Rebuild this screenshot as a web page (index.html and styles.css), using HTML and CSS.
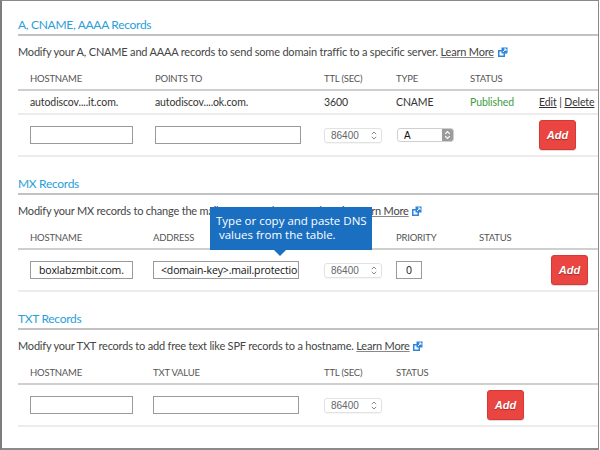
FILE: index.html
```html
<!DOCTYPE html>
<html>
<head>
<meta charset="utf-8">
<link rel="stylesheet" href="styles.css">
</head>
<body>
<div class="frame">
  <section class="section">
    <h2 class="title">A, CNAME, AAAA Records</h2>
    <p class="desc">Modify your A, CNAME and AAAA records to send some domain traffic to a specific server. <a class="learn">Learn More</a> <svg class="ext" width="10" height="10" viewBox="0 0 10 10"><rect x="0.75" y="3.75" width="5.5" height="5.5" fill="none" stroke="#2f86d8" stroke-width="1.5"/><rect x="3.5" y="0.5" width="6" height="6" fill="#2f86d8"/><path d="M5 5 L8 2 M6 2 H8 V4" stroke="#fff" stroke-width="1" fill="none"/></svg></p>
    <div class="table t-a">
      <div class="row head"><span>Hostname</span><span>Points To</span><span>TTL (Sec)</span><span>Type</span><span>Status</span><span></span></div>
      <div class="row data"><span>autodiscov....it.com.</span><span>autodiscov....ok.com.</span><span>3600</span><span>CNAME</span><span class="published">Published</span><span class="actions"><a>Edit</a> | <a>Delete</a></span></div>
      <div class="row inputs">
        <span><span class="input w-host"></span></span>
        <span><span class="input w-val"></span></span>
        <span><span class="spin">86400<svg class="chev" width="6" height="9" viewBox="0 0 6 9"><path d="M0.8 3.2 L3 1 L5.2 3.2 M0.8 5.8 L3 8 L5.2 5.8" stroke="#888" stroke-width="1" fill="none"/></svg></span></span>
        <span><span class="select">A<span class="sel-btn"><svg width="7" height="10" viewBox="0 0 7 10"><path d="M1.2 3.8 L3.5 1.5 L5.8 3.8 M1.2 6.2 L3.5 8.5 L5.8 6.2" stroke="#fff" stroke-width="1.2" fill="none"/></svg></span></span></span>
        <span></span>
        <span><button class="add">Add</button></span>
      </div>
    </div>
  </section>

  <section class="section mx">
    <h2 class="title">MX Records</h2>
    <p class="desc">Modify your MX records to change the mail server used for your domain. <a class="learn">Learn More</a> <svg class="ext" width="10" height="10" viewBox="0 0 10 10"><rect x="0.75" y="3.75" width="5.5" height="5.5" fill="none" stroke="#2f86d8" stroke-width="1.5"/><rect x="3.5" y="0.5" width="6" height="6" fill="#2f86d8"/><path d="M5 5 L8 2 M6 2 H8 V4" stroke="#fff" stroke-width="1" fill="none"/></svg></p>
    <div class="table t-mx">
      <div class="row head"><span>Hostname</span><span>Address</span><span>TTL (Sec)</span><span>Priority</span><span>Status</span><span></span></div>
      <div class="row inputs">
        <span><span class="input w-host filled">boxlabzmbit.com.</span></span>
        <span><span class="input w-val filled">&lt;domain-key&gt;.mail.protection.outlook.com.</span></span>
        <span><span class="spin">86400<svg class="chev" width="6" height="9" viewBox="0 0 6 9"><path d="M0.8 3.2 L3 1 L5.2 3.2 M0.8 5.8 L3 8 L5.2 5.8" stroke="#888" stroke-width="1" fill="none"/></svg></span></span>
        <span><span class="input w-prio filled">0</span></span>
        <span></span>
        <span><button class="add">Add</button></span>
      </div>
    </div>
    <div class="tooltip">Type or copy and paste DNS<br>&nbsp;values from the table.</div>
  </section>

  <section class="section">
    <h2 class="title">TXT Records</h2>
    <p class="desc">Modify your TXT records to add free text like SPF records to a hostname. <a class="learn">Learn More</a> <svg class="ext" width="10" height="10" viewBox="0 0 10 10"><rect x="0.75" y="3.75" width="5.5" height="5.5" fill="none" stroke="#2f86d8" stroke-width="1.5"/><rect x="3.5" y="0.5" width="6" height="6" fill="#2f86d8"/><path d="M5 5 L8 2 M6 2 H8 V4" stroke="#fff" stroke-width="1" fill="none"/></svg></p>
    <div class="table t-txt">
      <div class="row head"><span>Hostname</span><span>TXT Value</span><span>TTL (Sec)</span><span>Status</span><span></span></div>
      <div class="row inputs">
        <span><span class="input w-host"></span></span>
        <span><span class="input w-val"></span></span>
        <span><span class="spin">86400<svg class="chev" width="6" height="9" viewBox="0 0 6 9"><path d="M0.8 3.2 L3 1 L5.2 3.2 M0.8 5.8 L3 8 L5.2 5.8" stroke="#888" stroke-width="1" fill="none"/></svg></span></span>
        <span></span>
        <span><button class="add">Add</button></span>
      </div>
    </div>
  </section>
</div>
</body>
</html>
```

FILE: styles.css
```css
* { box-sizing: border-box; }
html, body { margin: 0; padding: 0; background: #fff; }
body { font-family: Lato, "Open Sans", sans-serif; color: #444; }

.frame {
  width: 599px;
  height: 450px;
  border: 1px solid #8a8a8a;
  border-left: 2px solid #7d7d7d;
  border-bottom-width: 2px;
  overflow: hidden;
  padding-left: 16px;
  background: #fff;
}

.section { position: relative; }

.title {
  margin: 17px 0 0;
  font-weight: normal;
  font-size: 12px;
  letter-spacing: -0.3px;
  line-height: 19px;
  color: #2a9ed8;
  border-bottom: 2px solid #c2c2c2;
  white-space: nowrap;
}
.section:first-child .title { margin-top: 14px; }

.desc {
  margin: 8px 0 0;
  font-size: 11px;
  letter-spacing: -0.2px;
  line-height: 16px;
  color: #454545;
  white-space: nowrap;
}
.learn { color: #444; text-decoration: underline; text-decoration-color: #888; }
.ext { vertical-align: -1px; margin-left: 1px; }

.table { margin-top: 12px; }

.row {
  display: grid;
  padding-left: 12px;
  align-items: center;
  white-space: nowrap;
}
.t-a .row { grid-template-columns: 125px 169px 72px 74px 69px 1fr; }
.t-mx .row { grid-template-columns: 123px 171px 72px 83px 72px 1fr; }
.t-txt .row { grid-template-columns: 123px 171px 72px 91px 1fr; }

.head {
  font-size: 9.5px;
  letter-spacing: -0.2px;
  line-height: 14px;
  text-transform: uppercase;
  color: #555;
  padding-bottom: 3px;
  border-bottom: 2px solid #cfcfcf;
}

.data {
  font-size: 10.5px;
  letter-spacing: -0.1px;
  line-height: 22px;
  color: #333;
  border-bottom: 2px solid #ececec;
}
.published { color: #3c9d3c; }
.actions a { color: #333; text-decoration: underline; }

.inputs {
  height: 42px;
  border-bottom: 2px solid #ececec;
}

.input {
  display: block;
  height: 18px;
  border: 1px solid #9a9a9a;
  background: #fff;
  font-family: "Open Sans", sans-serif;
  font-size: 10.5px;
  letter-spacing: -0.15px;
  line-height: 16px;
  color: #111;
  padding: 0 8px;
  overflow: hidden;
  white-space: nowrap;
}
.w-host { width: 103px; }
.w-val { width: 146px; padding: 0 7px; }
.w-prio { width: 26px; padding: 0 9px; }

.spin {
  display: flex;
  align-items: center;
  justify-content: space-between;
  width: 58px;
  height: 15px;
  border: 1px solid #e2e2e2;
  border-radius: 3px;
  padding: 0 4px 0 6px;
  font-family: "Liberation Sans", sans-serif;
  font-size: 10px;
  color: #666;
  box-shadow: 0 1px 1px rgba(0,0,0,0.04);
}

.select {
  display: flex;
  align-items: center;
  justify-content: space-between;
  width: 57px;
  height: 14px;
  margin-left: 1px;
  border: 1px solid #cfcfcf;
  border-radius: 3px;
  padding-left: 6px;
  font-family: "Liberation Sans", sans-serif;
  font-size: 10px;
  color: #111;
  overflow: hidden;
}
.sel-btn {
  display: flex;
  align-items: center;
  justify-content: center;
  width: 11px;
  height: 100%;
  background: #9c9c9c;
}

.add {
  width: 37px;
  height: 30px;
  border: 1px solid #d23a36;
  border-radius: 3px;
  background: #ea4541;
  color: #fff;
  font-family: "Liberation Sans", sans-serif;
  font-weight: bold;
  font-style: italic;
  font-size: 11px;
  padding: 0;
  text-shadow: 0 1px 1px rgba(0,0,0,0.35);
  box-shadow: 0 1px 1px rgba(0,0,0,0.15);
}
.t-a .add { margin-top: -1px; }

.tooltip {
  position: absolute;
  left: 192px;
  top: 33px;
  width: 162px;
  height: 43px;
  background: #1b6fc1;
  color: #fff;
  font-family: "Open Sans", sans-serif;
  font-size: 11.5px;
  line-height: 14px;
  padding: 7px 0 0 6px;
  white-space: nowrap;
}
.tooltip::after {
  content: "";
  position: absolute;
  left: 64px;
  bottom: -6px;
  border-left: 6px solid transparent;
  border-right: 6px solid transparent;
  border-top: 6px solid #1b6fc1;
}
```
